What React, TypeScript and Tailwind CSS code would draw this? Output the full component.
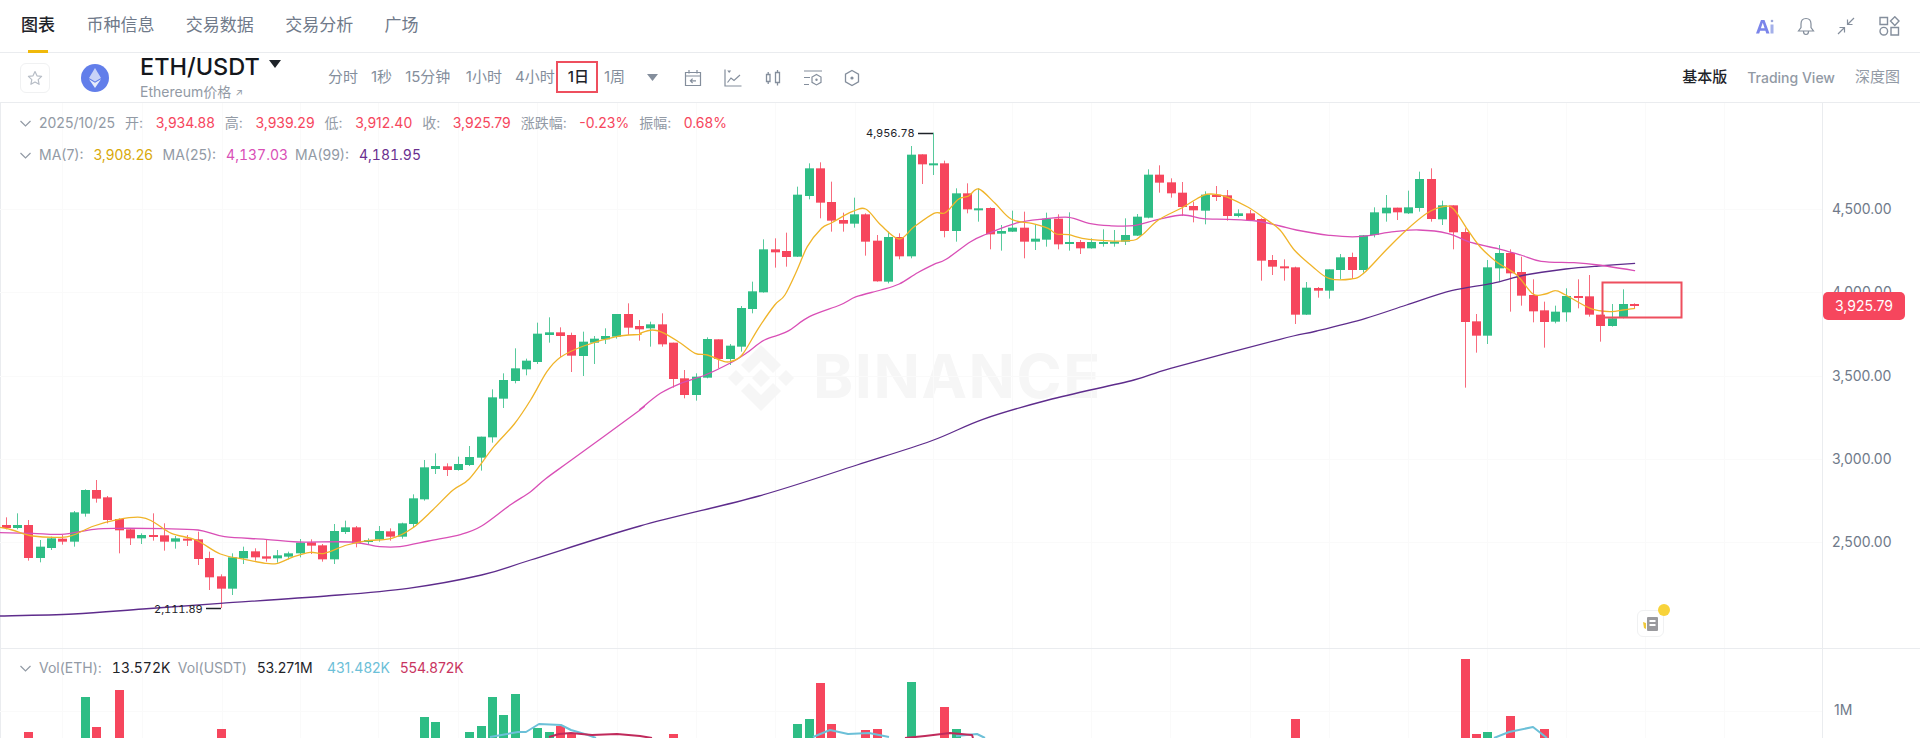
import React from 'react';

const GREEN = '#2ebd85';
const RED = '#f6465d';

// rows: [wick top, body top, body bottom, wick bottom, up?] in 3x px from base y
const toCandles = (base: number, rows: number[][]) =>
  rows.map(([hi, top, bot, lo, up]) => ({
    hi: base + hi / 3,
    top: base + top / 3,
    bot: base + bot / 3,
    lo: base + lo / 3,
    up: up === 1,
  }));

const candles = [
  ...toCandles(440, [
    [232, 255, 264, 268, 0], [220, 255, 264, 268, 1], [240, 255, 354, 362, 0], [300, 320, 354, 367, 1],
    [290, 295, 324, 330, 1], [285, 296, 305, 314, 0], [213, 217, 305, 320, 1], [148, 150, 221, 230, 1],
    [120, 150, 176, 188, 0], [168, 172, 240, 250, 0], [235, 237, 271, 340, 0], [265, 268, 295, 315, 0],
    [280, 285, 295, 312, 1], [220, 285, 291, 302, 0], [250, 286, 305, 332, 0], [288, 295, 305, 326, 1],
    [285, 296, 302, 318, 0], [275, 298, 357, 375, 0], [335, 354, 412, 450, 0], [403, 409, 446, 504, 0],
    [340, 352, 446, 465, 1], [320, 333, 355, 372, 1], [325, 334, 352, 362, 0], [298, 349, 356, 365, 0],
    [330, 346, 355, 368, 1], [335, 340, 350, 358, 1], [297, 308, 340, 352, 1], [298, 307, 317, 342, 0],
    [312, 316, 358, 365, 0], [252, 273, 358, 372, 1], [242, 262, 276, 282, 1], [258, 262, 310, 322, 0],
    [295, 300, 306, 315, 1], [258, 273, 298, 305, 1], [265, 274, 290, 302, 0], [248, 250, 290, 296, 1],
    [163, 175, 252, 262, 1],
  ]),
  ...toCandles(240, [
    [660, 682, 778, 782, 1], [640, 678, 687, 702, 1], [670, 679, 690, 708, 0], [650, 672, 690, 692, 1],
    [618, 651, 675, 678, 1], [590, 590, 653, 692, 1], [448, 472, 592, 608, 1], [400, 420, 476, 504, 1],
    [325, 385, 423, 430, 1], [356, 362, 388, 406, 1], [248, 281, 366, 372, 1], [232, 277, 285, 308, 1],
    [262, 277, 288, 352, 0], [278, 285, 347, 396, 0], [275, 305, 348, 408, 1], [288, 296, 308, 372, 1],
    [265, 288, 298, 312, 1], [222, 222, 290, 296, 1], [190, 222, 263, 285, 0], [240, 258, 268, 302, 0],
  ]),
  ...toCandles(120, [
    [605, 613, 625, 680, 1], [580, 613, 673, 680, 0], [668, 668, 777, 803, 0], [750, 775, 825, 835, 0],
    [760, 770, 825, 842, 1], [652, 657, 773, 775, 1], [658, 658, 717, 745, 0], [672, 677, 717, 735, 1],
    [558, 564, 680, 695, 1], [485, 514, 567, 580, 1], [358, 388, 517, 518, 1], [355, 388, 397, 443, 0],
    [338, 393, 411, 440, 0], [200, 224, 410, 411, 1], [130, 145, 228, 238, 1], [127, 145, 248, 295, 0],
    [185, 246, 302, 335, 0], [278, 300, 311, 335, 0], [233, 283, 311, 323, 1], [280, 283, 365, 407, 0],
    [345, 362, 484, 485, 0], [335, 351, 485, 490, 1], [340, 351, 409, 418, 0], [78, 104, 409, 415, 1],
    [103, 103, 133, 192, 0], [38, 130, 135, 165, 1], [122, 130, 333, 352, 0], [205, 220, 333, 365, 1],
    [190, 220, 268, 280, 0], [205, 265, 270, 305, 1], [262, 264, 343, 388, 0], [315, 333, 341, 392, 1],
    [272, 323, 335, 336, 1], [275, 323, 365, 415, 0], [313, 356, 365, 390, 1], [278, 296, 359, 380, 1],
    [283, 296, 373, 388, 0], [277, 366, 372, 392, 1], [360, 366, 385, 402, 0], [355, 366, 385, 386, 1],
    [328, 366, 372, 380, 1], [330, 365, 371, 380, 1], [295, 345, 365, 375, 1], [282, 290, 347, 348, 1],
    [148, 164, 293, 295, 1], [136, 164, 188, 218, 0], [175, 187, 220, 233, 0], [186, 218, 261, 288, 0],
    [245, 258, 271, 307, 0], [214, 224, 272, 313, 1], [198, 224, 231, 243, 0], [210, 226, 288, 302, 0],
    [268, 280, 288, 292, 1], [270, 280, 300, 302, 0], [295, 297, 422, 482, 0], [405, 420, 440, 465, 0],
  ]),
  ...toCandles(150, [
    [328, 349, 354, 392, 0], [350, 352, 494, 522, 0], [396, 413, 494, 495, 1], [411, 414, 422, 443, 0],
    [358, 358, 422, 446, 1], [312, 322, 360, 388, 1], [308, 321, 360, 387, 0], [255, 256, 360, 368, 1],
    [172, 187, 255, 262, 1], [135, 173, 190, 215, 1], [173, 173, 187, 210, 0], [122, 172, 190, 192, 1],
    [65, 87, 174, 185, 1], [55, 87, 207, 215, 0], [152, 166, 208, 225, 1], [166, 166, 247, 298, 0],
    [235, 246, 516, 713, 0], [492, 514, 557, 608, 0], [330, 352, 557, 582, 1], [285, 309, 355, 395, 1],
    [298, 309, 370, 485, 0], [320, 366, 437, 467, 0], [388, 435, 484, 517, 0], [455, 481, 516, 593, 0],
    [467, 485, 515, 520, 1], [415, 438, 487, 515, 1], [388, 438, 444, 475, 0], [375, 439, 494, 500, 0],
    [494, 494, 528, 575, 0], [462, 505, 528, 530, 1], [418, 462, 502, 505, 1], [460, 462, 468, 475, 0],
  ]),
];

const candleX = (i: number) => 5.7 + 11.31 * i;

// traced line points, [x at 2.45x, y at 3x] relative to an origin
const trace = (x0: number, y0: number, pts: number[][]) =>
  pts.map(([x, y]) => [x0 + x / 2.45, y0 + y / 3]);

// Catmull-Rom through the traced points so the averages don't look faceted
const smooth = (pts: number[][]) => {
  let d = `M${pts[0][0].toFixed(1)} ${pts[0][1].toFixed(1)}`;
  for (let i = 0; i < pts.length - 1; i++) {
    const p0 = pts[Math.max(i - 1, 0)];
    const p1 = pts[i];
    const p2 = pts[i + 1];
    const p3 = pts[Math.min(i + 2, pts.length - 1)];
    const c1x = p1[0] + (p2[0] - p0[0]) / 6;
    const c1y = p1[1] + (p2[1] - p0[1]) / 6;
    const c2x = p2[0] - (p3[0] - p1[0]) / 6;
    const c2y = p2[1] - (p3[1] - p1[1]) / 6;
    d += `C${c1x.toFixed(1)} ${c1y.toFixed(1)} ${c2x.toFixed(1)} ${c2y.toFixed(1)} ${p2[0].toFixed(1)} ${p2[1].toFixed(1)}`;
  }
  return d;
};

const ma7 = smooth([
  ...trace(0, 440, [[0, 262], [30, 270], [80, 288], [150, 292], [180, 285], [230, 258], [290, 238], [345, 232], [375, 245], [420, 280], [480, 300], [540, 342], [600, 358], [650, 370], [680, 370], [720, 350], [760, 337], [795, 340], [850, 315], [900, 302], [960, 295], [1010, 265], [1060, 210], [1110, 150]]),
  ...trace(0, 240, [[1150, 716], [1210, 620], [1260, 552], [1300, 480], [1340, 395], [1373, 352], [1430, 318], [1510, 290], [1568, 283]]),
  ...trace(640, 120, [[0, 640], [30, 630], [60, 640], [100, 670], [135, 700], [165, 705], [200, 722], [220, 725], [250, 705], [290, 625], [330, 555], [355, 525], [385, 450], [410, 380], [445, 325], [470, 308], [520, 275], [553, 267], [590, 315], [635, 357], [670, 322], [720, 280], [748, 278], [780, 238], [805, 228], [830, 207], [870, 250], [910, 298], [960, 310], [1000, 325], [1020, 342], [1050, 344], [1100, 358], [1200, 362], [1230, 345], [1270, 300], [1330, 262], [1380, 226], [1410, 223], [1440, 232], [1490, 262], [1530, 295], [1568, 330]]),
  ...trace(1280, 150, [[35, 300], [80, 350], [120, 385], [175, 387], [205, 370], [260, 300], [310, 240], [360, 190], [400, 170], [425, 177], [460, 240], [490, 290], [530, 335], [580, 375], [620, 432], [650, 432], [675, 422], [700, 435], [760, 475], [810, 485], [840, 480], [870, 475]]),
]);

const ma25 = smooth([
  ...trace(0, 440, [[0, 278], [80, 280], [150, 283], [230, 268], [290, 265], [400, 266], [485, 270], [550, 290], [650, 298], [730, 306], [860, 306], [930, 320], [980, 320], [1050, 303], [1130, 283], [1180, 258], [1250, 195], [1300, 155]]),
  ...trace(0, 240, [[1337, 716], [1400, 660], [1568, 510]]),
  ...trace(640, 120, [[0, 868], [50, 820], [100, 790], [160, 765], [220, 730], [260, 700], [305, 660], [360, 635], [415, 590], [490, 555], [530, 530], [590, 510], [635, 492], [680, 458], [720, 433], [750, 418], [810, 365], [850, 342], [920, 310], [990, 297], [1050, 292], [1100, 310], [1150, 317], [1210, 317], [1270, 298], [1330, 285], [1380, 296], [1440, 298], [1510, 303], [1568, 318]]),
  ...trace(1280, 150, [[40, 240], [120, 256], [190, 260], [280, 245], [340, 240], [410, 250], [470, 278], [540, 298], [590, 315], [640, 334], [720, 338], [780, 345], [870, 362]]),
]);

const ma99 = smooth([
  ...trace(0, 440, [[0, 528], [180, 522], [350, 507], [540, 490], [800, 468], [1000, 445], [1180, 405], [1300, 360], [1568, 258]]),
  [759, 496], [857, 465], [931, 441],
  ...trace(640, 120, [[840, 898], [1000, 840], [1210, 780], [1300, 745], [1568, 658]]),
  ...trace(1280, 150, [[90, 543], [210, 505], [310, 465], [420, 422], [520, 400], [600, 375], [700, 357], [780, 348], [870, 340]]),
]);

// volume bars: candle index -> top y of the bar
const volumeBars: [number, number, boolean][] = [
  [2, 732, false], [7, 697, true], [8, 727, false], [10, 690, false], [19, 729, false],
  [37, 717, true], [38, 722, true], [41, 732, true], [42, 726, true], [43, 697, true],
  [44, 715, true], [45, 694, true], [47, 728, true], [48, 732, true], [49, 726, false],
  [50, 733, false], [59, 734, false], [70, 724, true], [71, 719, true], [72, 683, false],
  [73, 724, false], [76, 730, false], [77, 729, false], [80, 682, true], [83, 707, false],
  [84, 729, true], [114, 719, false], [129, 659, false], [130, 734, false], [131, 732, true],
  [133, 716, false], [136, 729, false],
];

const volBlue = [
  '490,737 518,732 526,732 539,724 561,725 571,730 588,735 596,738',
  '813,737 830,730 848,734 869,733 889,737',
  '956,736 977,734 985,738',
  '1494,738 1509,732 1533,727 1547,738',
];
const volRed = [
  '549,737 559,734 571,733 592,735 617,734 640,736 652,738',
  '905,738 925,736 950,733 972,735 973,738',
];

const prices = [
  { label: '4,500.00', y: 209 },
  { label: '4,000.00', y: 292 },
  { label: '3,500.00', y: 376 },
  { label: '3,000.00', y: 459 },
  { label: '2,500.00', y: 542 },
];

const gridX = [62, 142, 222, 300, 378, 458, 537, 617, 696, 775, 855, 933, 1012, 1091, 1170, 1250, 1329, 1408, 1487, 1566, 1645, 1724];

const tabs = ['图表', '币种信息', '交易数据', '交易分析', '广场'];
const intervals = ['分时', '1秒', '15分钟', '1小时', '4小时', '1日', '1周'];
const ohlc = [
  ['开:', '3,934.88'],
  ['高:', '3,939.29'],
  ['低:', '3,912.40'],
  ['收:', '3,925.79'],
  ['涨跌幅:', '-0.23%'],
  ['振幅:', '0.68%'],
];

function Grid({ top, bottom, rows }: { top: number; bottom: number; rows: number[] }) {
  return (
    <g stroke="#fafafa" strokeWidth="1">
      {gridX.map((x) => (
        <line key={x} x1={x + 0.5} x2={x + 0.5} y1={top} y2={bottom} />
      ))}
      {rows.map((y) => (
        <line key={y} x1={0} x2={1822} y1={y + 0.5} y2={y + 0.5} />
      ))}
    </g>
  );
}

function ToolIcons() {
  return (
    <div className="flex items-center gap-[21px] text-[#848e9c]">
      <svg width="18" height="18" viewBox="0 0 18 18" fill="none" stroke="currentColor" strokeWidth="1.2">
        <path d="M1.5 3.5h15v13h-15zM1.5 7h15M5 1v3.5M13 1v3.5" />
        <path d="M12 11.8H6.5M8.6 9.6l-2.2 2.2 2.2 2.2" />
      </svg>
      <svg width="20" height="20" viewBox="0 0 20 20" fill="none" stroke="currentColor" strokeWidth="1.2">
        <path d="M2 1.5v16.500h16.500" />
        <path d="M4.500 14.500l3.500-4.500 3 2.500 6-5.500" />
        <path d="M4.200 2.500h4L6.200 5z" fill="currentColor" stroke="none" />
      </svg>
      <svg width="18" height="18" viewBox="0 0 18 18" fill="none" stroke="currentColor" strokeWidth="1.3">
        <path d="M2.500 5.500h3.500v7h-3.500zM4.200 3v2.500M4.200 12.500v2.500M11.500 3.500h4v10h-4zM13.500 1v2.500M13.500 13.500v3" />
      </svg>
      <svg width="20" height="18" viewBox="0 0 20 18" fill="none" stroke="currentColor" strokeWidth="1.2">
        <path d="M1 2h18M1 8.500h6M1 15.500h5" />
        <path d="M13.500 5.500l4.500 2.600v5.200l-4.500 2.600-4.500-2.600V8.100z" />
        <circle cx="13.500" cy="10.700" r="1.200" fill="currentColor" stroke="none" />
      </svg>
      <svg width="16" height="18" viewBox="0 0 16 18" fill="none" stroke="currentColor" strokeWidth="1.3">
        <path d="M8 1.500l6.500 3.700v7.600L8 16.500l-6.500-3.700V5.200z" />
        <circle cx="8" cy="9" r="1.600" fill="currentColor" stroke="none" />
      </svg>
    </div>
  );
}

function LegendLabel({ children }: { children: React.ReactNode }) {
  return <span className="text-[#929aa5]">{children}</span>;
}

function Chevron() {
  return (
    <svg width="11" height="7" viewBox="0 0 11 7" fill="none" stroke="#929aa5" strokeWidth="1.200">
      <path d="M0.500 1l5 5 5-5" />
    </svg>
  );
}

export default function App() {
  return (
    <div className="w-[1920px] h-[738px] overflow-hidden bg-white flex flex-col [font-family:Inter,'Noto_Sans_CJK_SC',sans-serif]">
      {/* Tabs */}
      <div className="h-[53px] shrink-0 border-b border-[#eaecef] flex items-center justify-between pl-[21px] pr-[20px]">
        <div className="flex items-center gap-[31.4px] text-[17px] text-[#707a8a]">
          {tabs.map((tab, i) => (
            <div key={tab} className={`relative h-[53px] flex items-center ${i === 0 ? 'text-[#1e2329] font-medium' : ''}`}>
              {tab}
              {i === 0 && <div className="absolute left-[7px] bottom-0 w-5 h-[3px] bg-[#f0b90b]" />}
            </div>
          ))}
        </div>
        <div className="flex items-center text-[#848e9c]">
          <svg width="18" height="15" viewBox="0 0 18 15">
            <path d="M0 14.500L5 1h3.500l5 13.500H10.300l-.9-2.700H4.100l-.9 2.700zM4.900 9.300h3.700L6.750 3.800z" fill="#7b85ea" />
            <rect x="14.500" y="5.500" width="3" height="9" fill="#a3b0ea" />
            <circle cx="16" cy="2" r="1.300" fill="#9aa5d8" />
          </svg>
          <svg className="ml-[23px]" width="18" height="19" viewBox="0 0 18 19" fill="none" stroke="currentColor" strokeWidth="1.2">
            <path d="M9 1.500c-3.300 0-5 2.600-5 5.500v3.500L1.500 14h15L14 10.500V7c0-2.900-1.700-5.500-5-5.500zM6.500 14.500c0 2 1 3 2.500 3s2.500-1 2.500-3" />
          </svg>
          <svg className="ml-[22px]" width="18" height="18" viewBox="0 0 18 18" fill="none" stroke="currentColor" strokeWidth="1.2">
            <path d="M11 7L17 1M10.500 2.500V7.500H15.500M7 11l-6 6M2.500 10.500H7.500V15.500" />
          </svg>
          <svg className="ml-[24px]" width="21" height="20" viewBox="0 0 21 20" fill="none" stroke="currentColor" strokeWidth="1.4">
            <path d="M1 1.500h7.500v7H1zM12 11.500h7.500V19H12z" />
            <circle cx="4.800" cy="15.200" r="3.800" />
            <path d="M15.800 0.800l4.200 4.300-4.200 4.300-4.300-4.300z" />
          </svg>
        </div>
      </div>

      {/* Toolbar */}
      <div className="h-[50px] shrink-0 border-b border-[#eaecef] flex items-center pl-[20px] pr-[20px]">
        <div className="w-[30px] h-[30px] shrink-0 rounded-md border border-[#f0f1f2] flex items-center justify-center">
          <svg width="16" height="16" viewBox="0 0 16 16" fill="none" stroke="#b7bdc6" strokeWidth="1.200" strokeLinejoin="round">
            <path d="M8 1.500l2 4.300 4.600.6-3.400 3.200.9 4.700L8 12l-4.100 2.300.9-4.700L1.400 6.400 6 5.800z" />
          </svg>
        </div>
        <svg className="ml-[31px] shrink-0" width="28" height="28" viewBox="0 0 28 28">
          <circle cx="14" cy="14" r="14" fill="#627eea" />
          <path d="M14 4l-6 10 6 3.500 6-3.500z" fill="#c9d3f7" />
          <path d="M14 18.800L8 15.200l6 8.800 6-8.800z" fill="#e6ebfb" />
        </svg>
        <div className="ml-[31px] w-[188px] shrink-0 flex flex-col">
          <div className="flex items-center h-[30px] -mt-[3px]">
            <span className="text-[23.5px] leading-[30px] font-medium text-[#14171c]">ETH/USDT</span>
            <svg className="ml-[9px] mb-[6px]" width="12" height="8" viewBox="0 0 12 8">
              <path d="M0 0h12L6 8z" fill="#1e2329" />
            </svg>
          </div>
          <div className="flex items-center mt-[1px] text-[14px] leading-[18px] text-[#929aa5]">
            Ethereum价格
            <span className="ml-[4px] text-[10px]">↗</span>
          </div>
        </div>

        <div className="flex items-center gap-[13px] text-[15px] text-[#848e9c]">
          {intervals.map((item) => (
            <div
              key={item}
              className={`relative ${item === '1日' ? 'text-[#1e2329] font-medium' : ''} ${item === '1小时' ? 'ml-[2.5px]' : ''} ${item === '1周' ? 'ml-[2px]' : ''}`}
            >
              {item}
              {item === '1日' && (
                <div className="absolute -left-[12px] -top-[5px] w-[42px] h-[32px] border-2 border-[#ee4f5e]" />
              )}
            </div>
          ))}
        </div>
        <svg className="ml-[22px] mr-[26px]" width="11" height="7" viewBox="0 0 11 7">
          <path d="M0 0h11L5.500 7z" fill="#848e9c" />
        </svg>
        <ToolIcons />

        <div className="ml-auto flex items-center gap-[20px] text-[15px] text-[#929aa5]">
          <span className="text-[#1e2329] font-medium">基本版</span>
          <span className="text-[14px] font-medium">Trading View</span>
          <span>深度图</span>
        </div>
      </div>

      {/* Price pane */}
      <div className="h-[546px] shrink-0 border-b border-[#eaecef] flex">
        <div className="relative w-[1822px] shrink-0 border-l border-[#eaecef]">
          {/* Watermark word, painted under the chart */}
          <div className="absolute left-[812px] top-[241px] text-[61px] leading-[64px] font-bold tracking-[1.5px] text-[#f6f6f6]">
            BINANCE
          </div>

          <svg className="absolute left-[-1px] top-0" width="1822" height="545" viewBox="0 103 1822 545">
            <Grid top={103} bottom={648} rows={prices.map((p) => p.y)} />

            {/* watermark */}
            <path
              d="M761 345l20 20-8 8-12-12-12 12-8-8zM761 411l20-20-8-8-12 12-12-12-8 8zM761 369l9 9-9 9-9-9zM728 378l8-8 8 8-8 8zM794 378l-8-8-8 8 8 8z"
              fill="#f6f6f6"
            />

            {candles.map((c, i) => {
              const x = Math.round(candleX(i));
              const color = c.up ? GREEN : RED;
              return (
                <g key={i}>
                  <line x1={x + 0.5} x2={x + 0.5} y1={c.hi} y2={c.lo} stroke={color} strokeOpacity="0.8" strokeWidth="1" />
                  <rect x={x - 4} y={c.top} width="9" height={Math.max(c.bot - c.top, 2)} fill={color} />
                </g>
              );
            })}

            <path d={ma99} fill="none" stroke="#5e2c8c" strokeWidth="1.300" />
            <path d={ma25} fill="none" stroke="#d94fb6" strokeWidth="1.300" />
            <path d={ma7} fill="none" stroke="#f0b429" strokeWidth="1.300" />

            {/* high / low markers */}
            <path d="M918 133.500h15" stroke="#1e2329" strokeWidth="1.500" />
            <path d="M206 608.500h15" stroke="#1e2329" strokeWidth="1.500" />

            {/* annotation box */}
            <rect x="1602.500" y="282.500" width="79" height="35" fill="none" stroke="#ee4f5e" strokeWidth="2" />
          </svg>

          {/* Extreme labels */}
          <div className="absolute left-[865px] top-[23px] text-[11px] leading-[14px] tabular-nums text-[#1e2329]">4,956.78</div>
          <div className="absolute left-[153px] top-[499px] text-[11px] leading-[14px] tabular-nums text-[#1e2329]">2,111.89</div>

          {/* Legend */}
          <div className="absolute left-[19px] top-[11px] flex flex-col gap-[14px] text-[14px] leading-[18px]">
            <div className="flex items-center gap-[10px] text-[#f6465d]">
              <div className="flex items-center gap-[8px]">
                <Chevron />
                <LegendLabel>2025/10/25</LegendLabel>
              </div>
              {ohlc.map(([label, value]) => (
                <React.Fragment key={label}>
                  <span className="mr-[2.5px] text-[#929aa5]">{label}</span>
                  <span>{value}</span>
                </React.Fragment>
              ))}
            </div>
            <div className="flex items-center gap-[10px]">
              <div className="flex items-center gap-[8px]">
                <Chevron />
                <LegendLabel>MA(7):</LegendLabel>
              </div>
              <span className="w-[59px] text-[#d9a90a]">3,908.26</span>
              <LegendLabel>MA(25):</LegendLabel>
              <span className="w-[59px] text-[#d94fb6] tabular-nums">4,137.03</span>
              <LegendLabel>MA(99):</LegendLabel>
              <span className="w-[59px] text-[#6a2f8f] tabular-nums">4,181.95</span>
            </div>
          </div>

          {/* Notes button */}
          <div className="absolute left-[1636px] top-[507px] w-[27px] h-[27px] rounded-md border border-[#f0f1f2] bg-white flex items-center justify-center">
            <svg width="16" height="16" viewBox="0 0 16 16">
              <path d="M0 6l3 1v6l-2-1z" fill="#f0c93a" />
              <rect x="4" y="1" width="11" height="14" rx="1" fill="#9a9a9e" />
              <rect x="6.500" y="4" width="6" height="2" fill="#fff" />
              <rect x="6.500" y="8" width="6" height="2" fill="#fff" />
            </svg>
            <div className="absolute -right-[7px] -top-[7px] w-3 h-3 rounded-full bg-[#f8d33a]" />
          </div>
        </div>

        {/* Price axis */}
        <div className="relative flex-1 border-l border-[#eaecef] text-[14px] leading-[18px] text-[#707a8a]">
          {prices.map((p) => (
            <div key={p.label} className="absolute left-[9px]" style={{ top: p.y - 103 - 9 }}>
              {p.label}
            </div>
          ))}
          <div className="absolute left-0 top-[189px] w-[82px] h-[28px] rounded-[5px] bg-[#f6465d] text-white flex items-center justify-center">
            3,925.79
          </div>
        </div>
      </div>

      {/* Volume pane */}
      <div className="flex-1 flex min-h-0">
        <div className="relative w-[1822px] shrink-0 border-l border-[#eaecef]">
          <svg className="absolute left-[-1px] top-0" width="1822" height="89" viewBox="0 649 1822 89">
            <Grid top={649} bottom={738} rows={[711]} />
            {volumeBars.map(([i, top, up]) => (
              <rect key={i} x={Math.round(candleX(i)) - 4} y={top} width="9" height={738 - top} fill={up ? GREEN : RED} />
            ))}
            {volBlue.map((pts) => (
              <polyline key={pts} points={pts} fill="none" stroke="#6cc0d8" strokeWidth="2" strokeLinejoin="round" />
            ))}
            {volRed.map((pts) => (
              <polyline key={pts} points={pts} fill="none" stroke="#c02a5b" strokeWidth="2" strokeLinejoin="round" />
            ))}
          </svg>
          <div className="absolute left-[19px] top-[10px] flex items-center gap-[10px] text-[14px] leading-[18px]">
            <div className="flex items-center gap-[8px]">
              <Chevron />
              <LegendLabel>Vol(ETH):</LegendLabel>
            </div>
            <span className="w-[56px] text-[#1e2329] tabular-nums">13.572K</span>
            <LegendLabel>Vol(USDT)</LegendLabel>
            <span className="w-[60px] text-[#1e2329]">53.271M</span>
            <span className="w-[63px] text-[#6cc0d8]">431.482K</span>
            <span className="text-[#c9355f]">554.872K</span>
          </div>
        </div>
        <div className="relative flex-1 border-l border-[#eaecef] text-[14px] text-[#707a8a]">
          <div className="absolute left-[11px] top-[52px] leading-[18px]">1M</div>
        </div>
      </div>
    </div>
  );
}
